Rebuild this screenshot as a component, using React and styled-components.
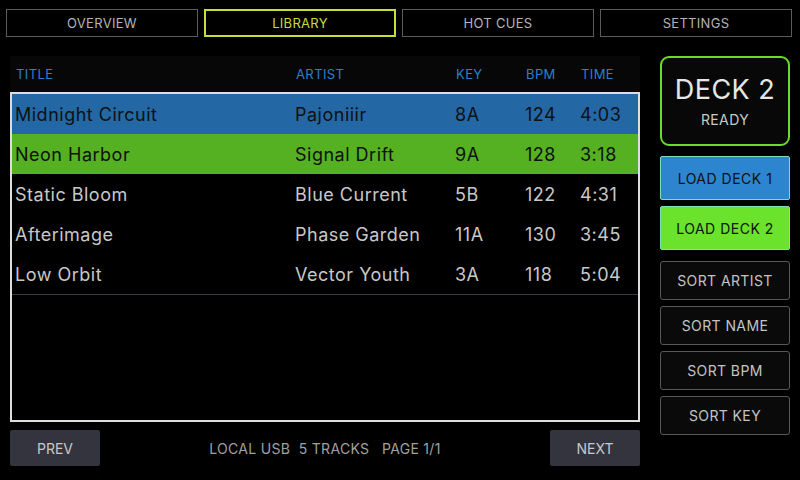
import styled, { createGlobalStyle } from "styled-components";

const Global = createGlobalStyle`
  html, body {
    margin: 0;
    padding: 0;
    background: #000;
  }
  body {
    width: 800px;
    height: 480px;
    overflow: hidden;
    font-family: Inter, "Open Sans", sans-serif;
  }
`;

const Page = styled.div`
  display: flex;
  flex-direction: column;
  width: 800px;
  height: 480px;
`;

const Tabs = styled.div`
  display: grid;
  grid-template-columns: repeat(4, 192px);
  gap: 6px;
  padding: 9px 0 0 6px;
`;

const Tab = styled.div`
  height: 28px;
  box-sizing: border-box;
  display: flex;
  align-items: center;
  justify-content: center;
  font-size: 13px;
  letter-spacing: 0.3px;
  color: ${(p) => (p.$active ? "#c8dc3a" : "#b4b4b4")};
  border: ${(p) => (p.$active ? "2px solid #c8dc3a" : "1px solid #5c5c5c")};
`;

const Main = styled.div`
  display: flex;
  gap: 20px;
  padding: 19px 0 0 10px;
`;

const LeftCol = styled.div`
  display: flex;
  flex-direction: column;
  width: 630px;
  gap: 8px;
`;

const Panel = styled.div`
  display: flex;
  flex-direction: column;
  height: 366px;
`;

const columns = "280px 160px 70px 55px 1fr";

const Header = styled.div`
  display: grid;
  grid-template-columns: ${columns};
  align-items: center;
  height: 36px;
  padding-left: 6px;
  background: #070707;
  color: #2b7fcc;
  font-size: 13px;
  letter-spacing: 0.4px;
`;

const ListBox = styled.div`
  flex: 1;
  border: 2px solid #dedede;
`;

const List = styled.div`
  border-bottom: 1px solid #3a3a46;
`;

const rowBg = { blue: "#2368a4", green: "#55b022" };

const Row = styled.div`
  display: grid;
  grid-template-columns: ${columns};
  align-items: center;
  height: 40px;
  padding-left: 3px;
  font-size: 18px;
  letter-spacing: 0.5px;
  background: ${(p) => rowBg[p.$tone] || "transparent"};
  color: ${(p) => (p.$tone ? "#101010" : "#c8c8c8")};
`;

const Footer = styled.div`
  display: flex;
  align-items: center;
  justify-content: space-between;
  height: 36px;
`;

const NavButton = styled.div`
  width: 90px;
  height: 36px;
  display: flex;
  align-items: center;
  justify-content: center;
  background: #34343e;
  border-radius: 2px;
  color: #c8c8c8;
  font-size: 14px;
`;

const Status = styled.div`
  color: #a0a0a0;
  font-size: 14px;
  white-space: pre;
  letter-spacing: 0.3px;
`;

const RightCol = styled.div`
  display: flex;
  flex-direction: column;
  width: 130px;
`;

const DeckCard = styled.div`
  height: 90px;
  box-sizing: border-box;
  border: 2px solid #68dc2c;
  border-radius: 9px;
  background: #080808;
  display: flex;
  flex-direction: column;
  align-items: center;
  justify-content: center;
  gap: 6px;
  margin-bottom: 10px;
`;

const DeckName = styled.div`
  color: #e6e6e6;
  font-size: 27px;
  line-height: 30px;
  letter-spacing: 0.5px;
`;

const DeckState = styled.div`
  color: #c8c8c8;
  font-size: 14px;
  letter-spacing: 0.4px;
`;

const loadColors = { 1: "#2d84cf", 2: "#6be22b" };

const LoadButton = styled.div`
  height: 44px;
  box-sizing: border-box;
  border: 1px solid #7de0b4;
  border-radius: 2px;
  background: ${(p) => loadColors[p.$deck]};
  color: #111;
  font-size: 14px;
  letter-spacing: 0.5px;
  display: flex;
  align-items: center;
  justify-content: center;
  margin-bottom: 6px;
`;

const SortStack = styled.div`
  display: flex;
  flex-direction: column;
  gap: 6px;
  margin-top: 5px;
`;

const SortButton = styled.div`
  height: 39px;
  box-sizing: border-box;
  border: 1px solid #585858;
  border-radius: 3px;
  background: #0a0a0a;
  color: #c4c4c4;
  font-size: 14px;
  letter-spacing: 0.4px;
  display: flex;
  align-items: center;
  justify-content: center;
`;

const tracks = [
  { title: "Midnight Circuit", artist: "Pajoniiir", key: "8A", bpm: 124, time: "4:03", tone: "blue" },
  { title: "Neon Harbor", artist: "Signal Drift", key: "9A", bpm: 128, time: "3:18", tone: "green" },
  { title: "Static Bloom", artist: "Blue Current", key: "5B", bpm: 122, time: "4:31" },
  { title: "Afterimage", artist: "Phase Garden", key: "11A", bpm: 130, time: "3:45" },
  { title: "Low Orbit", artist: "Vector Youth", key: "3A", bpm: 118, time: "5:04" },
];

export default function App() {
  return (
    <Page>
      <Global />
      <Tabs>
        <Tab>OVERVIEW</Tab>
        <Tab $active>LIBRARY</Tab>
        <Tab>HOT CUES</Tab>
        <Tab>SETTINGS</Tab>
      </Tabs>
      <Main>
        <LeftCol>
          <Panel>
            <Header>
              <span>TITLE</span>
              <span>ARTIST</span>
              <span>KEY</span>
              <span>BPM</span>
              <span>TIME</span>
            </Header>
            <ListBox>
              <List>
                {tracks.map((t) => (
                  <Row key={t.title} $tone={t.tone}>
                    <span>{t.title}</span>
                    <span>{t.artist}</span>
                    <span>{t.key}</span>
                    <span>{t.bpm}</span>
                    <span>{t.time}</span>
                  </Row>
                ))}
              </List>
            </ListBox>
          </Panel>
          <Footer>
            <NavButton>PREV</NavButton>
            <Status>{"LOCAL USB  5 TRACKS   PAGE 1/1"}</Status>
            <NavButton>NEXT</NavButton>
          </Footer>
        </LeftCol>
        <RightCol>
          <DeckCard>
            <DeckName>DECK 2</DeckName>
            <DeckState>READY</DeckState>
          </DeckCard>
          <LoadButton $deck={1}>LOAD DECK 1</LoadButton>
          <LoadButton $deck={2}>LOAD DECK 2</LoadButton>
          <SortStack>
            <SortButton>SORT ARTIST</SortButton>
            <SortButton>SORT NAME</SortButton>
            <SortButton>SORT BPM</SortButton>
            <SortButton>SORT KEY</SortButton>
          </SortStack>
        </RightCol>
      </Main>
    </Page>
  );
}
